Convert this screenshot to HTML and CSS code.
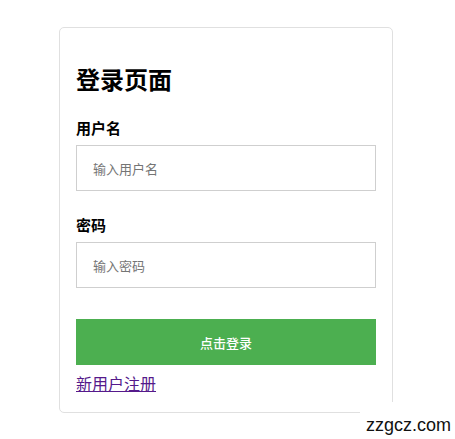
FILE: index.html
```html
<!DOCTYPE html>
<html lang="zh">
<head>
<meta charset="utf-8">
<link rel="stylesheet" href="styles.css">
</head>
<body>
<div class="card">
  <h2 class="title">登录页面</h2>
  <label class="label">用户名</label>
  <div class="input">输入用户名</div>
  <label class="label label-2">密码</label>
  <div class="input">输入密码</div>
  <div class="button">点击登录</div>
  <a class="link" href="#">新用户注册</a>
</div>
<div class="watermark">zzgcz.com</div>
</body>
</html>
```
FILE: styles.css
```css
html, body {
  margin: 0;
  padding: 0;
  background: #fff;
  width: 455px;
  height: 439px;
  overflow: hidden;
  font-family: "Liberation Sans", "Noto Sans CJK SC", sans-serif;
}
body {
  position: relative;
  padding: 27px 0 0 59px;
  box-sizing: border-box;
}
.card {
  width: 334px;
  height: 386px;
  box-sizing: border-box;
  border: 1px solid #e0e0e0;
  border-radius: 5px;
  padding: 38px 16px 16px 16px;
  display: flex;
  flex-direction: column;
  align-items: flex-start;
}
.title {
  margin: 0;
  font-size: 24px;
  line-height: 30px;
  font-weight: bold;
  color: #000;
}
.label {
  margin-top: 23px;
  font-size: 15px;
  line-height: 20px;
  font-weight: bold;
  color: #000;
}
.label-2 { margin-top: 25px; }
.input {
  margin-top: 6px;
  width: 300px;
  height: 46px;
  box-sizing: border-box;
  border: 1px solid #cfcfcf;
  padding-left: 16px;
  display: flex;
  align-items: center;
  font-size: 13px;
  color: #757575;
}
.button {
  margin-top: 31px;
  width: 300px;
  height: 46px;
  background: #4caf50;
  color: #fff;
  font-size: 13px;
  font-weight: 500;
  display: flex;
  align-items: center;
  justify-content: center;
}
.link {
  margin-top: 10px;
  font-size: 16px;
  line-height: 20px;
  color: #551a8b;
  text-decoration: underline;
}
.watermark {
  position: absolute;
  left: 360px;
  top: 402px;
  width: 95px;
  height: 37px;
  background: #fff;
  font-size: 18px;
  color: #111;
  padding: 13px 0 0 6px;
  box-sizing: border-box;
  line-height: 20px;
}
```
